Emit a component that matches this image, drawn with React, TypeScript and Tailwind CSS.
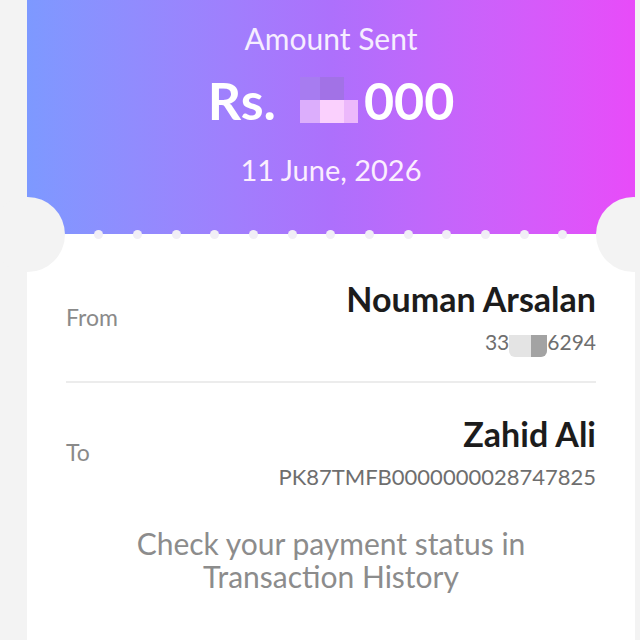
const dots = [98, 137, 176, 214, 253, 292, 330, 369, 408, 446, 485, 524, 562];

export default function App() {
  return (
    <div
      className="w-[640px] h-[640px] overflow-hidden bg-[#f3f3f3] pl-[27px] pr-[5px]"
      style={{ fontFamily: 'Lato, "Open Sans", sans-serif' }}
    >
      <div className="relative h-full bg-white">
        {/* gradient header */}
        <div className="flex h-[234px] flex-col items-center bg-gradient-to-r from-[#7d99ff] via-[#ad70fc] to-[#e84bf9] pt-[20px] text-white">
          <div className="text-[30px] font-normal leading-[36px] text-[#f6eeff]">Amount Sent</div>
          <div className="mt-[15px] flex items-center text-[52px] font-bold leading-[58px]">
            <span>Rs.</span>
            <span className="ml-[24px] flex h-[46px] w-[64px] flex-col">
              <span className="flex h-[23px]">
                <span className="w-[20px] bg-[#a77cf0]" />
                <span className="w-[24px] bg-[#a272e6]" />
                <span className="w-[20px]" />
              </span>
              <span className="flex h-[23px]">
                <span className="w-[20px] bg-[#dcaefc]" />
                <span className="w-[24px] bg-[#fad0fd]" />
                <span className="w-[14px] bg-[#ecb8fb]" />
              </span>
            </span>
            <span>000</span>
          </div>
          <div className="mt-[23px] text-[29px] font-normal leading-[36px] text-[#fbeefe]">11 June, 2026</div>
        </div>

        {/* ticket cut-outs */}
        <div className="absolute left-[-37px] top-[197px] h-[75px] w-[75px] rounded-full bg-[#f3f3f3]" />
        <div className="absolute right-[-36px] top-[197px] h-[75px] w-[75px] rounded-full bg-[#f3f3f3]" />
        {dots.map((x) => (
          <div
            key={x}
            className="absolute top-[230px] h-[9px] w-[9px] rounded-full bg-[#f1eef6]"
            style={{ left: x - 27 - 4.5 }}
          />
        ))}

        {/* details */}
        <div className="px-[39px] pt-[45px]">
          <div className="flex items-center justify-between">
            <div className="text-[23px] text-[#8a8a8a]">From</div>
            <div className="flex flex-col items-end">
              <div className="text-[34px] font-bold leading-[40px] text-[#1c1c1c]">Nouman Arsalan</div>
              <div className="mt-[10px] flex items-center text-[21px] leading-[26px] text-[#6e6e6e]">
                <span>33</span>
                <span className="flex h-[22px] w-[38px] translate-y-[4px]">
                  <span className="w-[22px] rounded-bl-[6px] bg-[#e4e4e4]" />
                  <span className="w-[16px] rounded-br-[6px] bg-[#a3a3a3]" />
                </span>
                <span>6294</span>
              </div>
            </div>
          </div>

          <div className="mt-[26px] h-[2px] bg-[#ececec]" />

          <div className="mt-[31px] flex items-center justify-between">
            <div className="text-[23px] text-[#8a8a8a]">To</div>
            <div className="flex flex-col items-end">
              <div className="text-[34px] font-bold leading-[40px] text-[#1c1c1c]">Zahid Ali</div>
              <div className="mt-[10px] text-[22px] leading-[26px] text-[#6e6e6e]">PK87TMFB0000000028747825</div>
            </div>
          </div>

          <div className="mt-[37px] text-center text-[30px] leading-[33px] text-[#8c8c8c]">
            Check your payment status in
            <br />
            Transaction History
          </div>
        </div>
      </div>
    </div>
  );
}
